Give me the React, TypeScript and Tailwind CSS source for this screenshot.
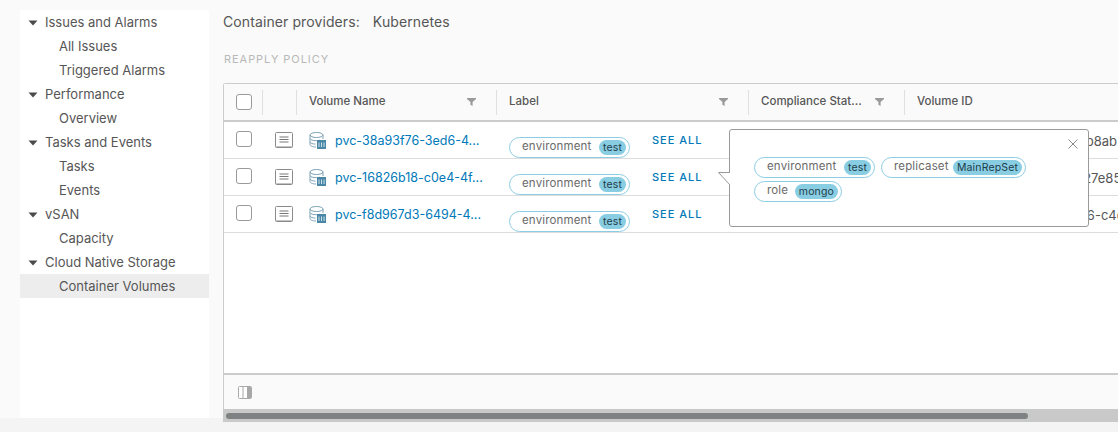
import React from "react";

const navGroups = [
  { title: "Issues and Alarms", items: ["All Issues", "Triggered Alarms"] },
  { title: "Performance", items: ["Overview"] },
  { title: "Tasks and Events", items: ["Tasks", "Events"] },
  { title: "vSAN", items: ["Capacity"] },
  { title: "Cloud Native Storage", items: ["Container Volumes"] },
];

const rows = [
  { name: "pvc-38a93f76-3ed6-4...", id: "38a93f76-3ed6-4c1e-a2b4b8ab" },
  { name: "pvc-16826b18-c0e4-4f...", id: "96826b08-c0e4-4f3a-90c27e85" },
  { name: "pvc-f8d967d3-6494-4...", id: "f8d967d3-6494-4ab7-8e156-c4d" },
];

function Caret() {
  return (
    <svg width="10" height="6" viewBox="0 0 10 6" className="shrink-0">
      <path d="M0.5 0.5H9.5L5 5.5Z" fill="#4a4a4a" />
    </svg>
  );
}

function FilterIcon() {
  return (
    <svg width="9" height="8" viewBox="0 0 9 8">
      <path d="M0 0H9V1L5.6 4V8L3.4 6.8V4L0 1Z" fill="#9a9a9a" />
    </svg>
  );
}

function Checkbox() {
  return <div className="w-4 h-4 rounded-[3px] border border-[#9a9a9a] bg-white" />;
}

function DetailIcon() {
  return (
    <svg width="18" height="16" viewBox="0 0 18 16">
      <rect x="0.5" y="0.5" width="17" height="15" rx="1" fill="#fff" stroke="#8a8a8a" />
      <path d="M1 14.5H17" stroke="#c4c4c4" />
      <path d="M4.5 5H13.5M4.5 7.5H13.5M4.5 10H13.5" stroke="#777777" />
    </svg>
  );
}

function VolumeIcon() {
  return (
    <svg width="17" height="17" viewBox="0 0 17 17" className="shrink-0">
      <ellipse cx="7.5" cy="3" rx="6.5" ry="2.5" fill="#fff" stroke="#7fa3b5" />
      <path d="M1 3V12.5C1 14 3.5 15 7 15M14 3V7M1 6.5C1.5 8 4 8.7 7.5 8.7C9 8.7 10 8.5 11 8.2M1 10C1.5 11.3 3.5 12 6.5 12.1" fill="none" stroke="#7fa3b5" />
      <rect x="8" y="8" width="9" height="9" fill="#4a86a5" />
      <path d="M10 10.5V15M12.5 10.5V15M15 10.5V15" stroke="#cfe3ec" />
    </svg>
  );
}

function Pill({ k, v, w }: { k: string; v: string; w: string }) {
  return (
    <span className={`inline-flex shrink-0 items-center justify-between h-[21px] rounded-full border border-[#8ccde3] bg-white pl-3 pr-[3px] text-[11.5px] tracking-[0.15px] text-[#6a6a6a] ${w}`}>
      <span className="-mt-px">{k}</span>
      <span className="h-[15px] leading-[15px] rounded-full bg-[#89cde2] px-1 text-[10.5px] text-[#1d3c4a]">{v}</span>
    </span>
  );
}

export default function App() {
  return (
    <div className="relative w-[1118px] h-[432px] overflow-hidden flex items-start bg-[linear-gradient(#fafafa_418px,#f4f4f4_418px)] font-['Inter','Noto_Sans',sans-serif]">
      {/* Sidebar */}
      <div className="ml-5 mt-[10px] w-[189px] h-[408px] shrink-0 bg-white pt-px text-[13px] text-[#565656]">
        {navGroups.map((group) => (
          <div key={group.title}>
            <div className="h-6 flex items-center pl-2 gap-[7px]">
              <Caret />
              <span>{group.title}</span>
            </div>
            {group.items.map((item) => (
              <div key={item} className={`h-6 flex items-center pl-[39px] ${item === "Container Volumes" ? "bg-[#ededed] -mt-px pt-px" : ""}`}>
                {item}
              </div>
            ))}
          </div>
        ))}
      </div>

      {/* Main */}
      <div className="ml-[14px] w-[895px] shrink-0 h-[422px] flex flex-col">
        <div className="h-[24px] mt-[10px] flex items-center gap-[13px] text-sm tracking-[0.1px] text-[#565656]">
          <span>Container providers:</span>
          <span>Kubernetes</span>
        </div>
        <div className="mt-[15px] h-[20px] pl-px flex items-center text-[11px] tracking-[0.95px] text-[#b8b8b8]">REAPPLY POLICY</div>

        {/* Table */}
        <div className="mt-[14px] flex-1 min-h-0 flex flex-col border-t border-l border-[#cccccc] rounded-tl-[3px] bg-white">
          <div className="h-[38px] flex items-center shrink-0 bg-[#fafafa] border-b-2 border-[#cccccc] text-[11.5px] font-medium text-[#565656]">
            <div className="w-[39px] shrink-0 h-[25px] flex items-center pl-3 border-r border-[#e0e0e0]"><Checkbox /></div>
            <div className="w-[34px] shrink-0 h-[25px] border-r border-[#e0e0e0]" />
            <div className="w-[200px] shrink-0 h-[25px] flex items-center justify-between pl-3 pr-5 border-r border-[#e0e0e0]">
              <span>Volume Name</span>
              <FilterIcon />
            </div>
            <div className="w-[252px] shrink-0 h-[25px] flex items-center justify-between pl-3 pr-5 border-r border-[#e0e0e0]">
              <span>Label</span>
              <FilterIcon />
            </div>
            <div className="w-[156px] shrink-0 h-[25px] flex items-center justify-between pl-3 pr-5 border-r border-[#e0e0e0]">
              <span>Compliance Stat...</span>
              <FilterIcon />
            </div>
            <div className="pl-3">Volume ID</div>
          </div>

          <div className="flex-1 min-h-0 overflow-hidden">
            {rows.map((row) => (
              <div key={row.name} className="h-[37px] border-b border-[#dddddd] text-[13px]">
                <div className="flex h-[36px]">
                  <div className="w-[39px] shrink-0 pl-3 pt-[9px]"><Checkbox /></div>
                  <div className="w-[34px] shrink-0 pl-[12px] pt-[10px]"><DetailIcon /></div>
                  <div className="w-[200px] shrink-0 pl-3 pt-[10px] flex gap-[9px] whitespace-nowrap text-[12.5px] text-[#0079b8]">
                    <VolumeIcon />
                    <span className="leading-[17px]">{row.name}</span>
                  </div>
                  <div className="w-[252px] shrink-0 pl-3 flex items-end">
                    <Pill k="environment" v="test" w="w-[121px]" />
                    <span className="ml-[22px] mb-[10px] text-[11px] font-medium tracking-[1px] text-[#0079b8] whitespace-nowrap">SEE ALL</span>
                  </div>
                  <div className="w-[156px] shrink-0" />
                  <div className="pl-3 pt-[10px] whitespace-nowrap text-[#565656]">{row.id}</div>
                </div>
              </div>
            ))}
          </div>

          <div className="h-[36px] shrink-0 bg-[#fafafa] border-t-2 border-[#cccccc] flex items-center pl-[14px]">
            <svg width="14" height="13" viewBox="0 0 14 13">
              <rect x="0.5" y="0.5" width="13" height="12" rx="1" fill="#fff" stroke="#a8a8a8" />
              <rect x="9" y="1" width="4" height="11" fill="#a8a8a8" />
              <path d="M5 1V12" stroke="#a8a8a8" />
            </svg>
          </div>
        </div>

        {/* Scrollbar */}
        <div className="h-[13px] shrink-0 bg-[#c9c9c9] flex items-center pl-[3px]">
          <div className="w-[802px] h-[6px] rounded-full bg-[#7f8282]" />
        </div>
      </div>

      {/* Popover */}
      <div className="absolute left-[729px] top-[129px] w-[360px] h-[98px] bg-white border border-[#9a9a9a] rounded-[3px] pl-6 pt-[27px]">
        <svg width="12" height="14" viewBox="0 0 12 14" className="absolute left-[-12px] top-[42px]">
          <path d="M12 0.5H0.5L12 13" fill="#fff" stroke="#9a9a9a" />
          <path d="M12 0H12.5V13H12Z" fill="#fff" />
        </svg>
        <svg width="10" height="10" viewBox="0 0 10 10" className="absolute right-[10px] top-[9px]">
          <path d="M0.5 0.5L9.5 9.5M9.5 0.5L0.5 9.5" stroke="#8a8a8a" fill="none" />
        </svg>
        <div className="flex flex-wrap gap-x-[6px] gap-y-[3px]">
          <Pill k="environment" v="test" w="w-[121px]" />
          <Pill k="replicaset" v="MainRepSet" w="w-[145px]" />
          <Pill k="role" v="mongo" w="w-[88px]" />
        </div>
      </div>
    </div>
  );
}
